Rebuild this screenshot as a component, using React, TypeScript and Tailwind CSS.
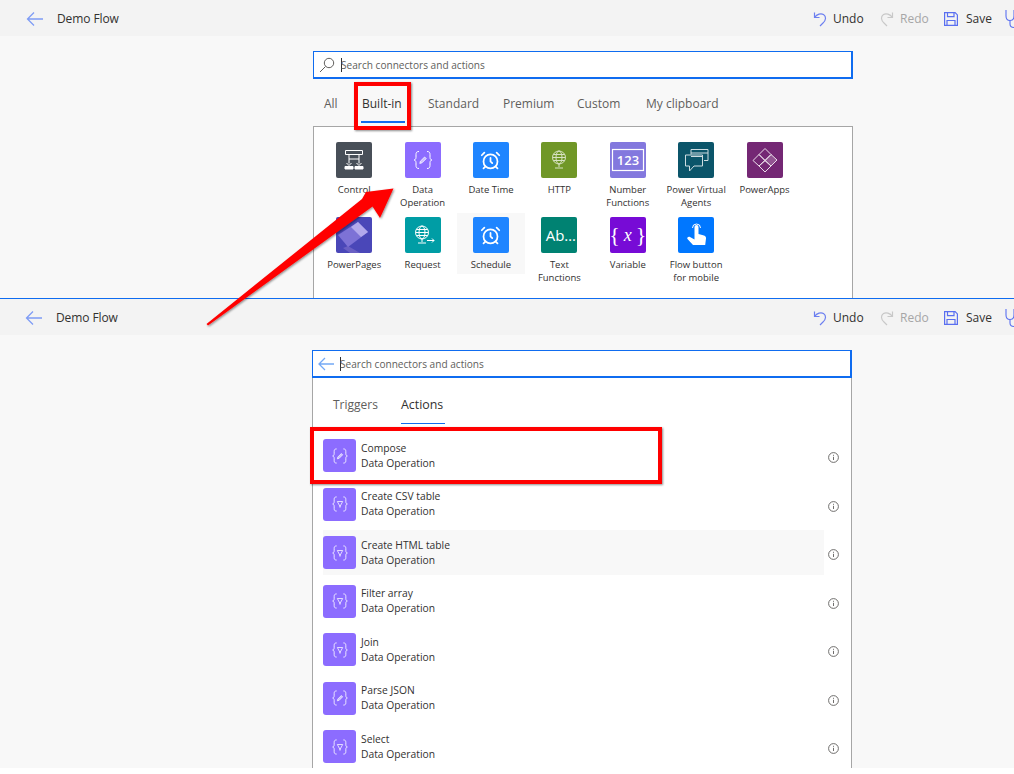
import React from "react";
import { AlarmClock } from "lucide-react";

const font = "font-['Open_Sans','Noto_Sans',sans-serif]";

function Braces({ kind, size = 36 }: { kind: "pen" | "filter"; size?: number }) {
  return (
    <svg width={size} height={size} viewBox="0 0 36 36" fill="none" stroke="#fff" strokeWidth="1">
      <path d="M14 9.500c-2.600 0-3 1.300-3 3.200v2.600c0 1.500-.6 2.400-1.800 2.700 1.200.3 1.800 1.200 1.800 2.700v2.600c0 1.900.4 3.200 3 3.200" />
      <path d="M22 9.500c2.600 0 3 1.300 3 3.200v2.600c0 1.500.6 2.400 1.800 2.700-1.200.3-1.800 1.200-1.800 2.700v2.600c0 1.900-.4 3.200-3 3.200" />
      {kind === "pen" ? (
        <path d="M14.800 21.400l.6-2.200 4.200-4.200 1.600 1.600-4.200 4.200z" fill="#fff" fillOpacity="0.55" strokeWidth="0.800" />
      ) : (
        <path d="M14.800 15h6.400l-3.200 6z M17 21.500h2" strokeWidth="0.900" />
      )}
    </svg>
  );
}

const Globe = ({ arrow }: { arrow?: boolean }) => (
  <svg width="36" height="36" viewBox="0 0 36 36" fill="none" stroke="#fff" strokeWidth="1" opacity={arrow ? 1 : 0.72}>
    <circle cx={arrow ? 17 : 18} cy="15.500" r="6.500" />
    <ellipse cx={arrow ? 17 : 18} cy="15.500" rx="3" ry="6.500" />
    <path d={arrow ? "M10.500 15.500h13 M11.500 12.500h11 M11.500 18.500h11 M17 22v3 M13 26h8" : "M11.500 15.500h13 M12.500 12.500h11 M12.500 18.500h11 M18 22v3 M14 26h8"} />
    {arrow && <path d="M22 23.500h7 M27 21.500l2 2-2 2" />}
  </svg>
);

function ConnectorIcon({ id }: { id: string }) {
  switch (id) {
    case "control":
      return (
        <svg width="36" height="36" viewBox="0 0 36 36" fill="none" stroke="#fff" strokeWidth="1">
          <path d="M9.500 8.500h17v4h-17z M13 12.500v9 M23 12.500v9 M13 17h10" />
          <path d="M10.500 21l2.500 2.500 2.500-2.500 M20.500 21l2.500 2.500 2.500-2.500" />
          <path d="M9 24.500h8v2.500H9z M19 24.500h8v2.500h-8z" fill="#fff" />
        </svg>
      );
    case "data":
      return <Braces kind="pen" />;
    case "clock":
      return <AlarmClock size={21} color="#fff" strokeWidth={2} />;
    case "http":
      return <Globe />;
    case "number":
      return (
        <svg width="36" height="36" viewBox="0 0 36 36" fill="none">
          <rect x="2.500" y="7.500" width="31" height="21" stroke="#fff" strokeWidth="1.200" />
          <text x="18" y="23" textAnchor="middle" fill="#fff" fontSize="13" fontWeight="600" fontFamily="Open Sans, sans-serif">123</text>
        </svg>
      );
    case "agents":
      return (
        <svg width="36" height="36" viewBox="0 0 36 36" fill="none" stroke="#fff" strokeWidth="1" opacity="0.8">
          <path d="M13 12.500V7.500h17v11h-4" />
          <path d="M13 11h17 M13 14.500h11" />
          <path d="M7.500 13h17v11H16l-4.500 5v-5h-4z" />
        </svg>
      );
    case "apps":
      return (
        <svg width="36" height="36" viewBox="0 0 36 36" fill="none" stroke="#fff" strokeWidth="1" opacity="0.85">
          <path d="M18 6.500l6 6-6 6-6-6z" />
          <path d="M18 18.500l6-6 6 5.500-6 6z" fill="#fff" fillOpacity="0.25" />
          <path d="M12 12.500l6 6-6 5.500-6-5.500z" />
          <path d="M12 24l6-5.500 6 5.500-6 6z" />
        </svg>
      );
    case "pages":
      return (
        <svg width="36" height="36" viewBox="0 0 36 36">
          <path d="M7 31l5-2 12 7H14z" fill="#6a60c4" />
          <path d="M2 18L22 5l10 10-20 15z" fill="#7d72d6" />
          <path d="M15 10l7-5 10 10-7 5z" fill="#b3a9ec" />
        </svg>
      );
    case "request":
      return <Globe arrow />;
    case "text":
      return (
        <span className={`${font} ml-[3px] text-[15px] leading-none text-white whitespace-nowrap`}>Ab…</span>
      );
    case "variable":
      return (
        <span className="flex items-center font-['Liberation_Serif',serif] text-white leading-none whitespace-nowrap text-[22px]">
          <span className="font-light">{"{"}</span>
          <span className="mx-[4px] italic text-[18px]">x</span>
          <span className="font-light">{"}"}</span>
        </span>
      );
    case "button":
      return (
        <svg width="36" height="36" viewBox="0 0 36 36" fill="#fff">
          <path d="M16.500 17V10a2 2 0 0 1 4 0v7l5.500 1.500c1.500.5 2.200 1.500 2 3l-.8 6.500H15l-5.500-6c-1-1.300 1-3 2.500-2l4.500 2.500z" />
          <path d="M14.500 11a4 4 0 1 1 8 0" fill="none" stroke="#fff" strokeWidth="1" />
        </svg>
      );
    default:
      return null;
  }
}

const connectors = [
  { id: "control", bg: "bg-[#484f58]", label: "Control" },
  { id: "data", bg: "bg-[#8c6cff]", label: "Data Operation" },
  { id: "clock", bg: "bg-[#1f85ff]", label: "Date Time" },
  { id: "http", bg: "bg-[#709727]", label: "HTTP" },
  { id: "number", bg: "bg-[#8378de]", label: "Number Functions" },
  { id: "agents", bg: "bg-[#0b556a]", label: "Power Virtual Agents" },
  { id: "apps", bg: "bg-[#742774]", label: "PowerApps" },
  { id: "pages", bg: "bg-[#4a47b8]", label: "PowerPages" },
  { id: "request", bg: "bg-[#009da5]", label: "Request" },
  { id: "clock", bg: "bg-[#1f85ff]", label: "Schedule", hover: true },
  { id: "text", bg: "bg-[#008272]", label: "Text Functions", narrow: true },
  { id: "variable", bg: "bg-[#770bd6]", label: "Variable" },
  { id: "button", bg: "bg-[#0077ff]", label: "Flow button for mobile" },
];

const actions: { name: string; kind: "pen" | "filter"; hover?: boolean }[] = [
  { name: "Compose", kind: "pen" },
  { name: "Create CSV table", kind: "filter" },
  { name: "Create HTML table", kind: "filter", hover: true },
  { name: "Filter array", kind: "filter" },
  { name: "Join", kind: "filter" },
  { name: "Parse JSON", kind: "pen" },
  { name: "Select", kind: "filter" },
];

function CommandBar({ left }: { left: string }) {
  return (
    <div className={`h-[36px] shrink-0 bg-[#f3f3f3] flex items-center pt-[2px] ${left}`}>
      <svg width="18" height="16" viewBox="0 0 18 16" fill="none" stroke="#7f9cf5" strokeWidth="1.300">
        <path d="M1.500 8h15.500 M8 1.500L1.500 8 8 14.500" />
      </svg>
      <span className="ml-[13px] text-[12px] text-[#323130] tracking-[-0.1px]">Demo Flow</span>
      <div className="ml-auto flex items-center w-[201px] shrink-0 overflow-hidden">
        <svg width="14" height="16" viewBox="0 0 14 16" fill="none" stroke="#6c7ff0" strokeWidth="1.200" className="shrink-0">
          <path d="M1.500 1.500v5h5 M1.500 6.500C4 3 8 2 10.500 3.500c3 2 2.500 6-.5 8.500l-3 3" />
        </svg>
        <span className="ml-[6px] w-[47px] shrink-0 text-[12px] text-[#323130]">Undo</span>
        <svg width="14" height="16" viewBox="0 0 14 16" fill="none" stroke="#c8c8c8" strokeWidth="1.200" className="shrink-0">
          <path d="M12.500 1.500v5h-5 M12.500 6.500C10 3 6 2 3.500 3.500c-3 2-2.500 6 .5 8.500l3 3" />
        </svg>
        <span className="ml-[6px] w-[44px] shrink-0 text-[12px] text-[#a6a6a6]">Redo</span>
        <svg width="14" height="14" viewBox="0 0 14 14" fill="none" stroke="#5a6ff0" strokeWidth="1.200" className="shrink-0">
          <path d="M.6.600h10.500l2.300 2.300v10.500H.6z M3.500.600v4h6.500v-4 M3 13.400V8.500h8v4.900" />
        </svg>
        <span className="ml-[8px] w-[39px] shrink-0 text-[12px] text-[#323130]">Save</span>
        <svg width="18" height="20" viewBox="0 0 18 20" fill="none" stroke="#5a6ff0" strokeWidth="1.100" className="shrink-0">
          <path d="M1 1v6c0 3 2 4.500 4 4.500S9 10 9 7V1 M5 11.500V15c0 2 1.500 3.500 4 3.500s4-1.500 4-4v-2" />
          <circle cx="13.500" cy="10.500" r="2" />
        </svg>
      </div>
    </div>
  );
}

function SearchBox({ back }: { back?: boolean }) {
  return (
    <div className="h-[28px] border border-[#0f6cf0] border-r-2 border-b-2 bg-white flex items-center pl-[5px]">
      {back ? (
        <svg width="16" height="14" viewBox="0 0 16 14" fill="none" stroke="#74a9f5" strokeWidth="1.300" className="shrink-0">
          <path d="M1 7h15 M7 1L1 7l6 6" />
        </svg>
      ) : (
        <svg width="16" height="16" viewBox="0 0 16 16" fill="none" stroke="#605e5c" strokeWidth="1" className="shrink-0">
          <circle cx="10" cy="6" r="4.700" />
          <path d="M6.500 9.500L1 15" />
        </svg>
      )}
      <span className="ml-[6px] w-px h-[14px] bg-[#323130] shrink-0" />
      <span className="-ml-px pt-[2px] text-[10.100px] text-[#605e5c]">Search connectors and actions</span>
    </div>
  );
}

export default function App() {
  return (
    <div className={`${font} relative w-[1014px] h-[774px] bg-white overflow-hidden`}>
      {/* Upper capture */}
      <div className="h-[298px] bg-[#f8f8f8] flex flex-col overflow-hidden">
        <CommandBar left="pl-[26px]" />
        <div className="w-[540px] ml-[313px] mt-[15px] shrink-0">
          <SearchBox />
          <div className="h-[47px] flex items-start pl-[11px] text-[12px] text-[#605e5c]">
            <span className="mt-[16px] w-[37px]">All</span>
            <span className="h-[44px] w-[44px] mr-[23px] pt-[16px] pl-px border-b-2 border-[#0f6cf0] text-[#323130] font-medium whitespace-nowrap">
              Built-in
            </span>
            <span className="mt-[16px] w-[75px]">Standard</span>
            <span className="mt-[16px] w-[74px]">Premium</span>
            <span className="mt-[16px] w-[69px]">Custom</span>
            <span className="mt-[16px] whitespace-nowrap">My clipboard</span>
          </div>
          <div className="h-[172px] border border-[#a6a6a6] border-b-0 bg-white pt-[11px] pl-[6px] pr-[50px]">
            <div className="grid grid-cols-[repeat(7,68.400px)] auto-rows-[75px]">
              {connectors.map((c) => (
                <div
                  key={c.label}
                  className={`flex flex-col items-center pt-[4px] ${c.hover ? "bg-[#f8f8f8] h-[61px]" : ""}`}
                >
                  <div className={`w-[36px] h-[36px] rounded-[2px] shrink-0 flex items-center justify-center overflow-hidden ${c.bg}`}>
                    <ConnectorIcon id={c.id} />
                  </div>
                  <div className={`mt-[5px] text-center text-[9.500px] leading-[13px] text-[#323130] ${c.narrow ? "w-[56px]" : "w-[68px]"}`}>
                    {c.label}
                  </div>
                </div>
              ))}
            </div>
          </div>
        </div>
      </div>
      {/* Separator */}
      <div className="h-px bg-[#0f6cf0]" />
      {/* Lower capture */}
      <div className="h-[469px] bg-[#f8f8f8] flex flex-col overflow-hidden">
        <CommandBar left="pl-[25px]" />
        <div className="w-[540px] ml-[312px] mt-[15px] shrink-0 flex flex-col">
          <SearchBox back />
          <div className="h-[390px] border-x border-[#a6a6a6] bg-white overflow-hidden">
            <div className="h-[46px] flex items-start pl-[20px] text-[12px]">
              <span className="mt-[18px] w-[68px] text-[#605e5c]">Triggers</span>
              <span className="h-[46px] w-[44px] pt-[18px] border-b border-[#0f6cf0] text-[#323130] font-medium whitespace-nowrap text-[12.400px]">
                Actions
              </span>
            </div>
            <div className="pt-[7.700px] flex flex-col">
              {actions.map((a) => (
                <div key={a.name} className="h-[48.500px] flex items-center pl-[10px] pr-[12px]">
                  <div className={`flex-1 h-[45px] flex items-center ${a.hover ? "bg-[#f8f8f8]" : ""}`}>
                    <div className="w-[33px] h-[33px] rounded-[3px] bg-[#8c6cff] flex items-center justify-center shrink-0">
                      <Braces kind={a.kind} size={30} />
                    </div>
                    <div className="ml-[5px] text-[10.300px] leading-[15px] text-[#323130]">
                      <div>{a.name}</div>
                      <div>Data Operation</div>
                    </div>
                  </div>
                  <svg width="11" height="11" viewBox="0 0 11 11" fill="none" stroke="#605e5c" strokeWidth="0.900" className="ml-[4px] mt-[4px] shrink-0">
                    <circle cx="5.500" cy="5.500" r="4.900" />
                    <path d="M5.500 4.800v3.200 M5.500 2.800v1" />
                  </svg>
                </div>
              ))}
            </div>
          </div>
        </div>
      </div>

      {/* Annotations lying over the captures */}
      <div className="absolute left-[354px] top-[82px] w-[57px] h-[48px] border-[4px] border-[#ff0000] shadow-[1px_1px_2px_rgba(0,0,0,0.45)]" />
      <div className="absolute left-[310px] top-[427px] w-[352px] h-[57px] border-[4px] border-[#ff0000] shadow-[1px_1px_2px_rgba(0,0,0,0.45)]" />
      <svg className="absolute left-0 top-0 pointer-events-none" width="1014" height="774" viewBox="0 0 1014 774">
        <defs>
          <filter id="sh" x="-10%" y="-10%" width="120%" height="120%">
            <feDropShadow dx="1" dy="1" stdDeviation="1" floodColor="#000" floodOpacity="0.45" />
          </filter>
        </defs>
        <path d="M393.500 188.500L380 218L372.500 206.500L208 325.500L206.500 324L362 199L366 192Z" fill="#ff0000" filter="url(#sh)" />
      </svg>
    </div>
  );
}
